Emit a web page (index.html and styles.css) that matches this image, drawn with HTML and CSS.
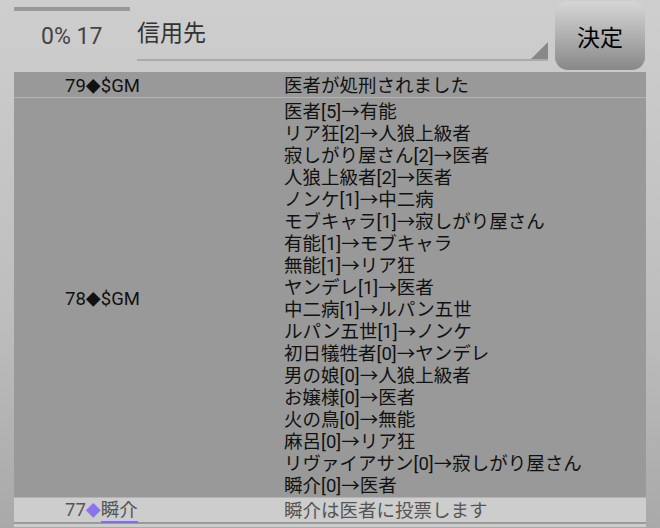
FILE: index.html
```html
<!DOCTYPE html>
<html lang="ja">
<head>
  <meta charset="UTF-8" />
  <title>投票</title>
  <meta name="viewport" content="width=device-width, initial-scale=1" />
  <link rel="stylesheet" href="styles.css">
</head>
<body>
  <div class="top-bar">
    <div class="status">
      <div class="progress"></div>
      <div class="count">0% 17</div>
    </div>
    <div class="select">
      <span class="select-label">信用先</span>
      <span class="select-arrow"></span>
    </div>
    <button class="submit">決定</button>
  </div>

  <div class="log">
    <div class="row">
      <div class="who">79<span class="dia">◆</span>$GM</div>
      <div class="msg">医者が処刑されました</div>
    </div>
    <div class="row">
      <div class="who">78<span class="dia">◆</span>$GM</div>
      <div class="msg">
        医者[5]→有能<br>
        リア狂[2]→人狼上級者<br>
        寂しがり屋さん[2]→医者<br>
        人狼上級者[2]→医者<br>
        ノンケ[1]→中二病<br>
        モブキャラ[1]→寂しがり屋さん<br>
        有能[1]→モブキャラ<br>
        無能[1]→リア狂<br>
        ヤンデレ[1]→医者<br>
        中二病[1]→ルパン五世<br>
        ルパン五世[1]→ノンケ<br>
        初日犠牲者[0]→ヤンデレ<br>
        男の娘[0]→人狼上級者<br>
        お嬢様[0]→医者<br>
        火の鳥[0]→無能<br>
        麻呂[0]→リア狂<br>
        リヴァイアサン[0]→寂しがり屋さん<br>
        瞬介[0]→医者
      </div>
    </div>
    <div class="row player">
      <div class="who">77<span class="dia mark">◆</span><a class="name" href="#">瞬介</a></div>
      <div class="msg">瞬介は医者に投票します</div>
    </div>
    <div class="row player next"></div>
  </div>
</body>
</html>
```

FILE: styles.css
```css
body {
  margin: 0;
  height: 528px;
  overflow: hidden;
  font-family: Roboto, "Noto Sans CJK JP", sans-serif;
  background: linear-gradient(#cecece, #bdbdbd 60%, #a9a9a9);
}

.top-bar {
  display: flex;
  height: 72px;
  padding: 0 15px 0 14px;
}

.status {
  width: 123px;
}

.progress {
  width: 116px;
  height: 4px;
  margin-top: 7px;
  background: #999;
}

.count {
  margin: 12px 0 0 27px;
  font-size: 23px;
  color: #444;
}

.select {
  position: relative;
  flex: 1;
  height: 60px;
  border-bottom: 2px solid #aaa;
  box-sizing: border-box;
  margin-top: 1px;
}

.select-label {
  display: block;
  margin-top: 13px;
  font-size: 23px;
  color: #333;
}

.select-arrow {
  position: absolute;
  right: 0;
  bottom: 0;
  width: 0;
  height: 0;
  border-left: 17px solid transparent;
  border-bottom: 17px solid #888;
}

.submit {
  width: 90px;
  height: 69px;
  margin: 1px 0 0 7px;
  border: none;
  border-radius: 13px;
  background: linear-gradient(#d6d6d6, #b0b0b0 50%, #888);
  font-family: Roboto, "Noto Sans CJK JP", sans-serif;
  font-size: 23px;
  color: #000;
  padding: 0;
}

.log {
  margin: 0 14px;
  background: #999;
}

.row {
  display: grid;
  grid-template-columns: 270px 1fr;
  align-items: center;
  background: #999;
  border-bottom: 1px solid #b4b4b4;
  font-size: 18.5px;
  color: #111;
}

.who {
  padding-left: 51px;
  padding-top: 2px;
}

.dia {
  font-size: 15px;
}

.msg {
  line-height: 22px;
  padding: 3px 0 0;
}

.row.player {
  background: #cdcdcd;
  color: #555;
  border-bottom: 2px solid #9a9a9a;
  height: 24px;
}

.row.player .who,
.row.player .msg {
  padding-top: 0;
  line-height: 24px;
}

.row.next {
  height: 3px;
  border-bottom: none;
}

.mark {
  color: #8b73ee;
}

.name {
  color: #555;
  text-decoration: none;
  border-bottom: 2px solid #7f6cf0;
}
```
